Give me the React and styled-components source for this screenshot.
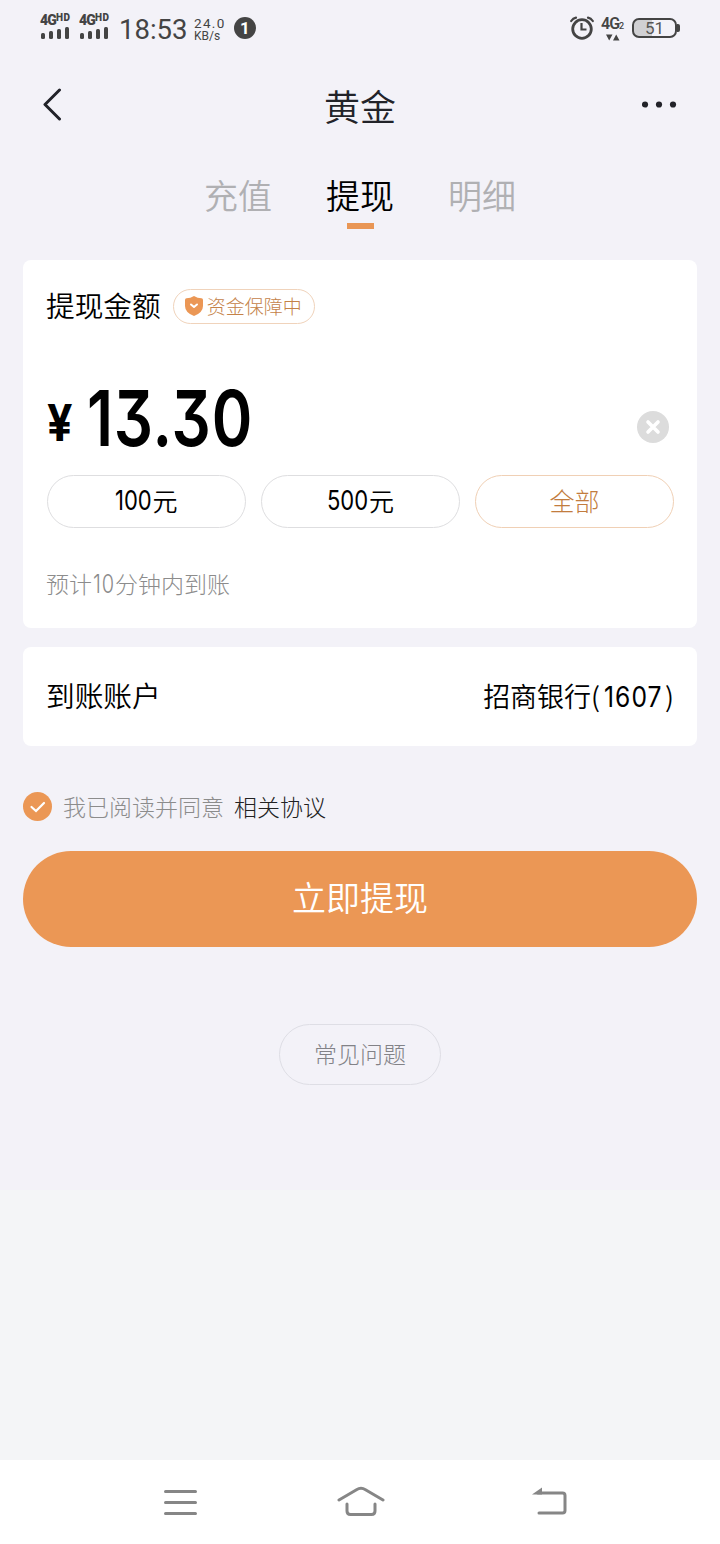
import { useState } from "react";
import styled, { createGlobalStyle } from "styled-components";

const GlobalStyle = createGlobalStyle`
  * {
    box-sizing: border-box;
  }
  body {
    margin: 0;
    background-color: #f4f5f7;
    font-family: "Noto Sans CJK SC", sans-serif;
    font-weight: 300;
    color: #000;
  }
  button {
    font: inherit;
    color: inherit;
    background: none;
    border: none;
    padding: 0;
  }
  svg {
    display: block;
    flex-shrink: 0;
  }
`;

const Screen = styled.div`
  width: 720px;
  height: 1544px;
  display: flex;
  flex-direction: column;
  background-color: #f4f5f7;
`;

const Page = styled.div`
  height: 1190px;
  background-color: #f3f2f8;
`;

const StatusBar = styled.div`
  height: 56px;
  padding: 0 40px;
  display: flex;
  justify-content: space-between;
  align-items: center;
  color: #444;
  font-family: Roboto, sans-serif;
`;

const StatusGroup = styled.div`
  display: flex;
  align-items: center;
`;

const Signal = styled.div`
  width: 31px;
  margin-right: 8px;
  margin-top: -3px;
`;

const SignalLabel = styled.div`
  display: flex;
  align-items: flex-start;
  font-family: Roboto, sans-serif;
  font-size: 14px;
  line-height: 14px;
  font-weight: 900;
  letter-spacing: -0.8px;
  white-space: nowrap;
  span {
    font-size: 10px;
    line-height: 9px;
    letter-spacing: 0.4px;
  }
`;

const Clock = styled.div`
  width: 68px;
  margin-left: 1px;
  margin-top: 3px;
  font-size: 27.5px;
  line-height: 32px;
  font-weight: 400;
`;

const Speed = styled.div`
  width: 40px;
  margin-left: 7px;
  margin-top: 2px;
  font-size: 12px;
  line-height: 12px;
  font-weight: 400;
  div:first-child {
    font-size: 13.5px;
    line-height: 13px;
    letter-spacing: 1.3px;
  }
`;

const Badge = styled.div`
  width: 22px;
  height: 22px;
  border-radius: 50%;
  background-color: #444;
  color: #fff;
  font-size: 17px;
  font-weight: 700;
  line-height: 22px;
  text-align: center;
`;

const Network = styled.div`
  width: 24px;
  margin: 0 7px 0 7px;
  font-size: 16px;
  line-height: 15px;
  font-weight: 600;
  letter-spacing: -1px;
  white-space: nowrap;
  span {
    font-size: 9px;
    font-weight: 500;
  }
  svg {
    margin: 0 0 0 5px;
  }
`;

const Battery = styled.div`
  width: 45px;
  height: 20px;
  border: 2px solid #444;
  border-radius: 7px;
  background: linear-gradient(to right, #d0d0d3 45%, transparent 45%);
  color: #555;
  font-size: 17px;
  line-height: 17px;
  font-weight: 400;
  text-align: center;
`;

const BatteryTip = styled.div`
  width: 3px;
  height: 8px;
  background-color: #444;
  border-radius: 0 2px 2px 0;
`;

const Header = styled.header`
  height: 98px;
  padding: 0 42px;
  display: flex;
  justify-content: space-between;
  align-items: center;
  color: #222329;
`;

const Title = styled.h1`
  margin: 0;
  font-size: 36px;
  line-height: 52px;
  font-weight: 350;
`;

const Tabs = styled.nav`
  height: 106px;
  padding-top: 16px;
  display: flex;
  justify-content: center;
  gap: 54px;
`;

const Tab = styled.button`
  height: 60px;
  display: flex;
  flex-direction: column;
  align-items: center;
  font-size: 34px;
  line-height: 50px;
  font-weight: 350;
  color: ${(props) => (props.$active ? "#000" : "#b0b0b3")};
  &::after {
    content: "";
    width: 27px;
    height: 6px;
    margin-top: 3px;
    background-color: ${(props) => (props.$active ? "#e99655" : "transparent")};
  }
`;

const Card = styled.section`
  margin: 0 23px;
  padding: 0 23px;
  border-radius: 8px;
  background-color: #fff;
`;

const AmountCard = styled(Card)`
  height: 368px;
`;

const CardHead = styled.div`
  height: 93px;
  display: flex;
  align-items: center;
  gap: 12px;
`;

const Label = styled.div`
  padding-bottom: 3px;
  font-size: 28.7px;
  line-height: 40px;
  font-weight: 350;
`;

const Guarantee = styled.div`
  width: 142px;
  height: 35px;
  padding: 0 0 1px 11px;
  border: 1px solid #f0d3bb;
  border-radius: 18px;
  display: flex;
  align-items: center;
  gap: 4px;
  font-size: 19px;
  line-height: 30px;
  color: #c48248;
  white-space: nowrap;
`;

const AmountRow = styled.div`
  height: 122px;
  padding-top: 8px;
  display: flex;
  align-items: center;
  justify-content: space-between;
`;

const Amount = styled.div`
  padding-left: 1px;
  display: flex;
  align-items: baseline;
  font-family: Inter, sans-serif;
  font-feature-settings: "cv09";
`;

const Currency = styled.span`
  width: 40px;
  font-size: 51px;
  line-height: 80px;
  font-weight: 700;
  transform: translateY(-5px) scaleX(0.88);
  transform-origin: left;
`;

const Figure = styled.span`
  font-size: 77px;
  line-height: 114px;
  font-weight: 600;
  letter-spacing: 1px;
  transform: scaleX(0.8);
  transform-origin: left;
`;

const Clear = styled.button`
  margin: 17px 5px 0 0;
`;

const Presets = styled.div`
  padding-left: 1px;
  display: grid;
  grid-template-columns: repeat(3, 199px);
  gap: 15px;
`;

const Preset = styled.button`
  height: 53px;
  padding-bottom: 4px;
  border: 1px solid ${(props) => (props.$active ? "#f0d0b5" : "#dedee0")};
  border-radius: 27px;
  display: flex;
  justify-content: center;
  align-items: center;
  font-size: 25px;
  line-height: 40px;
  font-weight: ${(props) => (props.$active ? 300 : 350)};
  color: ${(props) => (props.$active ? "#c27c3e" : "#000")};
`;

/* narrow digits; the box takes the width of the squeezed text */
const Digits = styled.span`
  display: inline-block;
  width: ${(props) => props.$width}px;
  margin-left: ${(props) => props.$left || 0}px;
  font-family: Inter, sans-serif;
  font-size: ${(props) => props.$size}px;
  font-weight: ${(props) => props.$weight || 400};
  letter-spacing: ${(props) => props.$tracking || 0}px;
  white-space: nowrap;
  transform: scaleX(${(props) => props.$scale || 0.8});
  transform-origin: left;
`;

const Hint = styled.div`
  margin-top: 38px;
  font-size: 23px;
  line-height: 34px;
  color: #8c8c8c;
`;

const AccountCard = styled(Card)`
  height: 99px;
  margin-top: 19px;
  display: flex;
  align-items: center;
  justify-content: space-between;
`;

const Bank = styled.div`
  font-size: 27px;
  line-height: 40px;
  font-weight: 350;
  white-space: nowrap;
`;

const Agreement = styled.div`
  height: 105px;
  padding: 16px 23px 0;
  display: flex;
  align-items: center;
  font-size: 23px;
  line-height: 34px;
  color: #8c8c8c;
  svg {
    margin-right: 11px;
  }
`;

const AgreementText = styled.div`
  padding-bottom: 2px;
  span {
    margin-left: 10px;
    color: #222;
  }
`;

const Submit = styled.button`
  display: block;
  width: 674px;
  height: 96px;
  margin: 0 auto;
  padding-bottom: 5px;
  border-radius: 48px;
  background-color: #eb9755;
  font-size: 34px;
  line-height: 50px;
  font-weight: 350;
  color: #fff;
`;

const Faq = styled.button`
  display: block;
  width: 162px;
  height: 61px;
  margin: 77px auto 0;
  padding-bottom: 4px;
  border: 1px solid #dedee5;
  border-radius: 31px;
  font-size: 23px;
  line-height: 34px;
  color: #828287;
`;

const NavBar = styled.footer`
  height: 84px;
  margin-top: auto;
  padding: 0 152px 0 163px;
  display: flex;
  justify-content: space-between;
  align-items: center;
  background-color: #fff;
`;

const HomeIcon = styled.svg`
  margin-right: 9px;
`;

function SignalIcon() {
  return (
    <Signal>
      <SignalLabel>
        4G<span>HD</span>
      </SignalLabel>
      <svg width="31" height="13" fill="#444">
        <rect x="1" y="6" width="4" height="6" rx="1.5" />
        <rect x="9" y="4" width="4" height="8" rx="1.5" />
        <rect x="17" y="2" width="4" height="10" rx="1.5" />
        <rect x="25" y="0" width="4" height="12" rx="1.5" />
      </svg>
    </Signal>
  );
}

function AlarmIcon() {
  return (
    <svg width="24" height="24" fill="none" stroke="#444" strokeLinecap="round">
      <circle cx="12" cy="13" r="9.3" strokeWidth="2.8" />
      <path d="M11.500 7V13.500H16.500" strokeWidth="2.200" strokeLinecap="butt" />
      <path d="M1.200 5Q3 2.200 6 1.600M22.800 5Q21 2.200 18 1.600" strokeWidth="2.200" />
    </svg>
  );
}

const presets = [
  { key: "100", digits: "100", width: 37, unit: "元" },
  { key: "500", digits: "500", width: 42, unit: "元" },
  { key: "all", unit: "全部" },
];

const tabs = ["充值", "提现", "明细"];

function App() {
  const [tab, setTab] = useState("提现");
  const [preset, setPreset] = useState("all");

  return (
    <Screen>
      <GlobalStyle />
      <Page>
        <StatusBar>
          <StatusGroup>
            <SignalIcon />
            <SignalIcon />
            <Clock>18:53</Clock>
            <Speed>
              <div>24.0</div>
              <div>KB/s</div>
            </Speed>
            <Badge>1</Badge>
          </StatusGroup>
          <StatusGroup>
            <AlarmIcon />
            <Network>
              4G<span>2</span>
              <svg width="14" height="7" fill="#444">
                <path d="M0 0.500H6.500L3.200 6.500ZM7 6.500H13.500L10.200 0.500Z" />
              </svg>
            </Network>
            <Battery>51</Battery>
            <BatteryTip />
          </StatusGroup>
        </StatusBar>

        <Header>
          <svg width="36" height="34" fill="none" stroke="#222329" strokeWidth="3">
            <path d="M17.500 2L3 16.500L17.500 31" strokeLinecap="round" strokeLinejoin="round" />
          </svg>
          <Title>黄金</Title>
          <svg width="36" height="8" fill="#222329">
            <circle cx="3" cy="3.500" r="3.100" />
            <circle cx="17" cy="3.500" r="3.100" />
            <circle cx="31" cy="3.500" r="3.100" />
          </svg>
        </Header>

        <Tabs>
          {tabs.map((name) => (
            <Tab key={name} $active={name === tab} onClick={() => setTab(name)}>
              {name}
            </Tab>
          ))}
        </Tabs>

        <AmountCard>
          <CardHead>
            <Label>提现金额</Label>
            <Guarantee>
              <svg width="18" height="20" viewBox="0 0 18 20" fill="none">
                <path
                  d="M9 0Q12.500 2.300 16.500 2.300Q18 2.300 18 4V10Q18 16.500 9 20Q0 16.500 0 10V4Q0 2.300 1.500 2.300Q5.500 2.300 9 0Z"
                  fill="#eb9755"
                />
                <path
                  d="M6 8.500L9 11L12 8.500"
                  stroke="#fff"
                  strokeWidth="2"
                  strokeLinecap="round"
                  strokeLinejoin="round"
                />
              </svg>
              资金保障中
            </Guarantee>
          </CardHead>
          <AmountRow>
            <Amount>
              <Currency>¥</Currency>
              <Figure>13.30</Figure>
            </Amount>
            <Clear aria-label="clear">
              <svg width="32" height="32">
                <circle cx="16" cy="16" r="16" fill="#dcdcdc" />
                <path
                  d="M11 11L21 21M21 11L11 21"
                  stroke="#fff"
                  strokeWidth="3.600"
                  strokeLinecap="round"
                />
              </svg>
            </Clear>
          </AmountRow>
          <Presets>
            {presets.map(({ key, digits, width, unit }) => (
              <Preset
                key={key}
                $active={key === preset}
                onClick={() => setPreset(key)}
              >
                {digits && (
                  <Digits $size={27.5} $width={width}>
                    {digits}
                  </Digits>
                )}
                {unit}
              </Preset>
            ))}
          </Presets>
          <Hint>
            预计
            <Digits $size={25} $width={22} $left={1} $tracking={1} $weight={300}>
              10
            </Digits>
            分钟内到账
          </Hint>
        </AmountCard>

        <AccountCard>
          <Label>到账账户</Label>
          <Bank>
            招商银行(
            <Digits $size={28} $width={61} $left={4} $tracking={1.2} $scale={0.88}>
              1607
            </Digits>
            )
          </Bank>
        </AccountCard>

        <Agreement>
          <svg width="29" height="29">
            <circle cx="14.500" cy="14.500" r="14.500" fill="#eb9755" />
            <path
              d="M8.500 15L13 19L21 11"
              fill="none"
              stroke="#fff"
              strokeWidth="2.200"
              strokeLinecap="round"
            />
          </svg>
          <AgreementText>
            我已阅读并同意<span>相关协议</span>
          </AgreementText>
        </Agreement>

        <Submit>立即提现</Submit>
        <Faq>常见问题</Faq>
      </Page>

      <NavBar>
        <svg width="35" height="28" stroke="#868686" strokeWidth="3" strokeLinecap="round">
          <path d="M2.500 3.500H32.500M2.500 14.500H32.500M2.500 25.500H32.500" />
        </svg>
        <HomeIcon width="48" height="32" fill="none" stroke="#868686" strokeWidth="3" strokeLinecap="round">
          <path d="M2 14L19.500 3.700Q24 1 28.500 3.700L46 14" />
          <path d="M10 18V25Q10 28.500 13.500 28.500H34.500Q38 28.500 38 25V18" />
        </HomeIcon>
        <svg width="36" height="30" fill="none" stroke="#868686" strokeWidth="3">
          <path d="M6 6H30.500Q33 6 33 8.500V23.500Q33 26 30.500 26H7" strokeLinecap="round" />
          <path d="M0 7.500L10 0.500V7.500Z" fill="#868686" stroke="none" />
        </svg>
      </NavBar>
    </Screen>
  );
}

export default App;
